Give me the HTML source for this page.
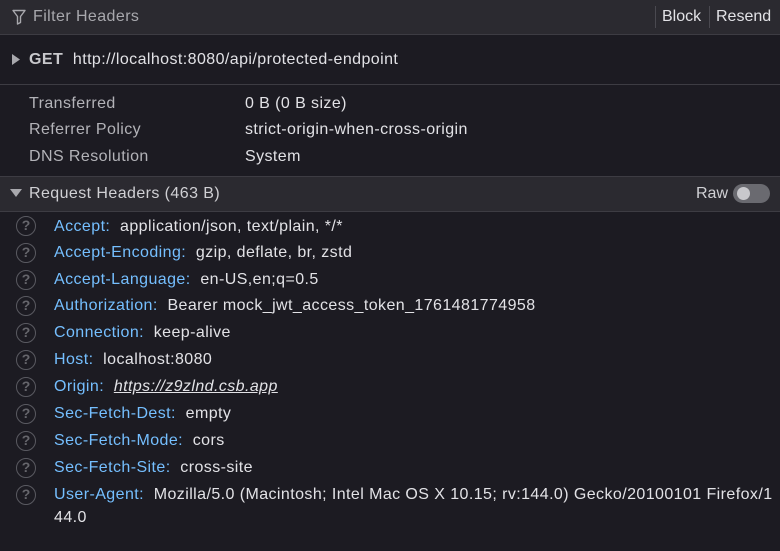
<!DOCTYPE html>
<html><head><style>
*{margin:0;padding:0;box-sizing:border-box}
body{width:780px;height:551px;background:#1c1b22;font-family:"Liberation Sans",sans-serif;font-size:16px;letter-spacing:0.42px;color:#e2e2e6;position:relative;overflow:hidden}
.a{position:absolute;white-space:nowrap;line-height:18px}
.hl{position:absolute;left:0;width:780px;height:1px;background:#3d3c43}
.k{color:#75bfff}
.g{color:#b3b3b8}
.q{position:absolute;left:16px;width:20px;height:20px;border:1.5px solid #5a5a61;border-radius:50%;color:#66666c;font-size:14px;line-height:17px;text-align:center;letter-spacing:0;font-weight:bold}
</style></head><body>
<div style="position:absolute;left:0;top:0;width:780px;height:34px;background:#2b2a30"></div>
<svg class="a" style="left:12px;top:9px" width="14" height="16" viewBox="0 0 14 16"><path d="M1 1.5h12l-4.5 6v6l-3 1.5v-7.5z" fill="none" stroke="#a8a8ad" stroke-width="1.4" stroke-linejoin="round"/></svg>
<div class="a" style="left:33px;top:8px;color:#a8a8ad">Filter Headers</div>
<div style="position:absolute;left:655px;top:6px;width:1px;height:22px;background:#4a4950"></div>
<div style="position:absolute;left:709px;top:6px;width:1px;height:22px;background:#4a4950"></div>
<div class="a" style="left:662px;top:8px;letter-spacing:0">Block</div>
<div class="a" style="left:716px;top:8px;letter-spacing:0">Resend</div>
<div class="hl" style="top:34px"></div>
<svg class="a" style="left:12px;top:54px" width="8" height="11"><path d="M0 0L8 5.5L0 11z" fill="#a8a8ad"/></svg>
<div class="a" style="left:29px;top:51px"><b style="color:#c8c8cc">GET</b>&nbsp; http://localhost:8080/api/protected-endpoint</div>
<div class="hl" style="top:84px"></div>
<div class="a g" style="left:29px;top:95px">Transferred</div><div class="a" style="left:245px;top:95px">0 B (0 B size)</div>
<div class="a g" style="left:29px;top:121px">Referrer Policy</div><div class="a" style="left:245px;top:121px">strict-origin-when-cross-origin</div>
<div class="a g" style="left:29px;top:148px">DNS Resolution</div><div class="a" style="left:245px;top:148px">System</div>
<div class="hl" style="top:176px"></div>
<div style="position:absolute;left:0;top:177px;width:780px;height:34px;background:#2b2a30"></div>
<svg class="a" style="left:10px;top:189px" width="12" height="8"><path d="M0 0H12L6 8z" fill="#a8a8ad"/></svg>
<div class="a" style="left:29px;top:185px;color:#d0d0d4">Request Headers (463 B)</div>
<div class="a" style="left:696px;top:185px;color:#d0d0d4;letter-spacing:0">Raw</div>
<div style="position:absolute;left:733px;top:184px;width:37px;height:19px;border-radius:10px;background:#6a6a70"></div>
<div style="position:absolute;left:737px;top:187px;width:13px;height:13px;border-radius:50%;background:#c8c8cc"></div>
<div class="hl" style="top:211px"></div>

<div class="q" style="top:216px">?</div><div class="a" style="left:54px;top:218px"><span class="k">Accept:</span>&nbsp; application/json, text/plain, */*</div>
<div class="q" style="top:243px">?</div><div class="a" style="left:54px;top:244px"><span class="k">Accept-Encoding:</span>&nbsp; gzip, deflate, br, zstd</div>
<div class="q" style="top:270px">?</div><div class="a" style="left:54px;top:271px"><span class="k">Accept-Language:</span>&nbsp; en-US,en;q=0.5</div>
<div class="q" style="top:296px">?</div><div class="a" style="left:54px;top:297px"><span class="k">Authorization:</span>&nbsp; Bearer mock_jwt_access_token_1761481774958</div>
<div class="q" style="top:323px">?</div><div class="a" style="left:54px;top:324px"><span class="k">Connection:</span>&nbsp; keep-alive</div>
<div class="q" style="top:350px">?</div><div class="a" style="left:54px;top:351px"><span class="k">Host:</span>&nbsp; localhost:8080</div>
<div class="q" style="top:377px">?</div><div class="a" style="left:54px;top:378px"><span class="k">Origin:</span>&nbsp; <i style="text-decoration:underline">https://z9zlnd.csb.app</i></div>
<div class="q" style="top:404px">?</div><div class="a" style="left:54px;top:405px"><span class="k">Sec-Fetch-Dest:</span>&nbsp; empty</div>
<div class="q" style="top:431px">?</div><div class="a" style="left:54px;top:432px"><span class="k">Sec-Fetch-Mode:</span>&nbsp; cors</div>
<div class="q" style="top:458px">?</div><div class="a" style="left:54px;top:459px"><span class="k">Sec-Fetch-Site:</span>&nbsp; cross-site</div>
<div class="q" style="top:485px">?</div><div class="a" style="left:54px;top:486px"><span class="k">User-Agent:</span>&nbsp; Mozilla/5.0 (Macintosh; Intel Mac OS X 10.15; rv:144.0) Gecko/20100101 Firefox/1</div>
<div class="a" style="left:54px;top:509px">44.0</div>
</body></html>
